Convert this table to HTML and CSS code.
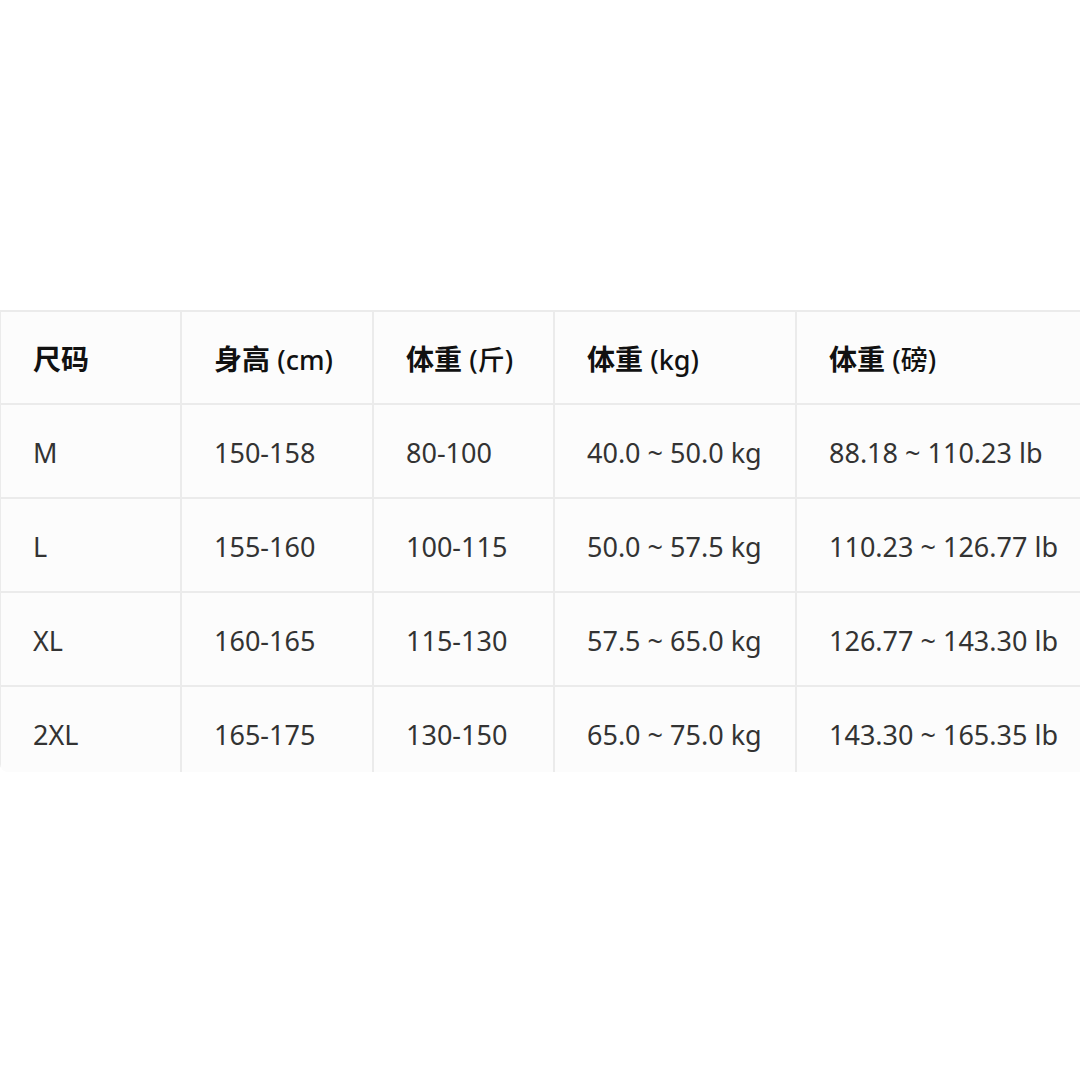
FILE: index.html
```html
<!DOCTYPE html>
<html lang="zh">
<head>
<meta charset="utf-8">
<link rel="stylesheet" href="styles.css">
</head>
<body>
<div class="page">
  <div class="frame">
    <table class="size-table">
      <colgroup>
        <col class="c1"><col class="c2"><col class="c3"><col class="c4"><col class="c5">
      </colgroup>
      <thead>
        <tr>
          <th>尺码</th>
          <th>身高 <span class="unit">(cm)</span></th>
          <th>体重 <span class="unit">(斤)</span></th>
          <th>体重 <span class="unit">(kg)</span></th>
          <th>体重 <span class="unit">(磅)</span></th>
        </tr>
      </thead>
      <tbody>
        <tr><td>M</td><td>150-158</td><td>80-100</td><td>40.0 ~ 50.0 kg</td><td>88.18 ~ 110.23 lb</td></tr>
        <tr><td>L</td><td>155-160</td><td>100-115</td><td>50.0 ~ 57.5 kg</td><td>110.23 ~ 126.77 lb</td></tr>
        <tr><td>XL</td><td>160-165</td><td>115-130</td><td>57.5 ~ 65.0 kg</td><td>126.77 ~ 143.30 lb</td></tr>
        <tr><td>2XL</td><td>165-175</td><td>130-150</td><td>65.0 ~ 75.0 kg</td><td>143.30 ~ 165.35 lb</td></tr>
      </tbody>
    </table>
  </div>
</div>
</body>
</html>
```

FILE: styles.css
```css
html, body {
  margin: 0;
  padding: 0;
  background: #ffffff;
}
.page {
  width: 1080px;
  height: 1080px;
  padding-top: 310px;
  box-sizing: border-box;
  overflow: hidden;
}
.frame {
  width: 1080px;
  height: 462px;
  overflow: hidden;
  border-bottom-left-radius: 8px;
}
.size-table {
  border-collapse: collapse;
  table-layout: fixed;
  width: 1110px;
  margin-left: -1px;
  font-family: "Noto Sans", "Noto Sans CJK SC", sans-serif;
  font-size: 27px;
  color: #333333;
  background: #fcfcfc;
}
.c1 { width: 181px; }
.c2 { width: 192px; }
.c3 { width: 181px; }
.c4 { width: 242px; }
.c5 { width: 314px; }
.size-table th,
.size-table td {
  border: 2px solid #ebebeb;
  padding: 0 0 0 32px;
  text-align: left;
  vertical-align: middle;
  white-space: nowrap;
}
.size-table td {
  height: 90px;
  padding-top: 2px;
}
.size-table th {
  height: 91px;
  font-weight: 700;
  font-size: 28px;
  color: #111111;
}
.size-table th .unit {
  font-weight: 500;
  font-size: 27px;
}
```
